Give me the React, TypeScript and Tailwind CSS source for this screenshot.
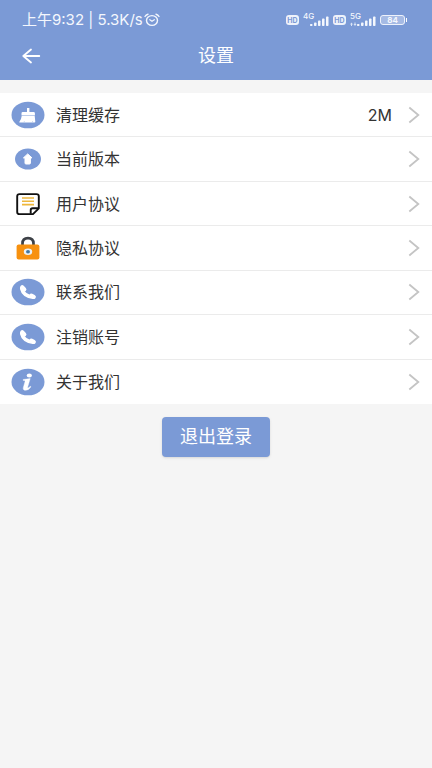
import type { ReactNode } from "react";

type SettingItem = {
  label: string;
  icon: ReactNode;
  value?: string;
};

function BroomIcon() {
  return (
    <svg width="34" height="28" viewBox="0 0 34 28" aria-hidden>
      <ellipse cx="17" cy="14" rx="16.5" ry="13.3" fill="#7b9ad6" />
      <path
        d="M16 7h2.400v4h4.200q1.300 0 1.300 1.200v2.300H10.500v-2.300q0-1.200 1.300-1.200H16zM10.700 14.900h13l.6 5.700q.1 1-.9 1H8.900q-1 0-.5-.9 1.900-2.300 2.300-5.800z"
        fill="#fff"
      />
      <path d="M12.800 21.800l.6-1.600M21.500 21.800v-1.600" stroke="#b9c9ea" strokeWidth="0.800" />
    </svg>
  );
}

function UpdateIcon() {
  return (
    <svg width="34" height="28" viewBox="0 0 34 28" aria-hidden>
      <ellipse cx="17" cy="14" rx="13" ry="10.600" fill="#7b9ad6" />
      <path
        d="M16.700 8.900l4.300 4h-1.600v5.200q0 .9-.9.900h-3.600q-.9 0-.9-.9v-5.200h-1.600z"
        fill="#fff"
        stroke="#fff"
        strokeWidth="1"
        strokeLinejoin="round"
      />
    </svg>
  );
}

function NoteIcon() {
  return (
    <svg width="34" height="28" viewBox="0 0 34 28" fill="none" aria-hidden>
      <path
        d="M8.500 4.100h17q2.300 0 2.300 2.200v12.100l-5.800 5.700H8.500q-2.300 0-2.300-2.200V6.300q0-2.200 2.300-2.200z"
        stroke="#111"
        strokeWidth="1.900"
        strokeLinejoin="round"
      />
      <path d="M19.700 23.800v-3.600q0-1.900 2-1.900h5.800" stroke="#111" strokeWidth="1.900" />
      <path d="M11 8h12M11 11.300h12M11 14.600h12" stroke="#eeb73c" strokeWidth="1.600" />
    </svg>
  );
}

function LockIcon() {
  return (
    <svg width="34" height="28" viewBox="0 0 34 28" fill="none" aria-hidden>
      <path d="M11.500 11V9.600q0-5.400 5.500-5.400t5.500 5.400V11" stroke="#3d4147" strokeWidth="2.700" />
      <rect x="5.600" y="10.500" width="22.800" height="15" rx="2" fill="#f7910f" />
      <ellipse cx="17" cy="17.700" rx="4.200" ry="3.300" fill="#e9f0f4" />
      <ellipse cx="17" cy="17.700" rx="2" ry="1.700" fill="#44779f" />
    </svg>
  );
}

function PhoneIcon() {
  return (
    <svg width="34" height="28" viewBox="0 0 34 28" fill="none" aria-hidden>
      <ellipse cx="17" cy="14" rx="16.5" ry="13.3" fill="#7b9ad6" />
      <g stroke="#fff" strokeLinecap="round">
        <path d="M10.600 10.500q1.700 7.300 11.500 8.900" strokeWidth="3.400" />
        <path d="M11.200 9.200l2.100 2.200M20.400 17.700l2.400 1.100" strokeWidth="4.200" />
      </g>
    </svg>
  );
}

function InfoIcon() {
  return (
    <svg width="34" height="28" viewBox="0 0 34 28" aria-hidden>
      <ellipse cx="17" cy="14" rx="16.5" ry="13.3" fill="#7b9ad6" />
      <ellipse cx="18.300" cy="7.400" rx="2.600" ry="2" fill="#fff" />
      <path
        d="M12.200 11.500l7-.9-2.500 8.300q-.3 1.200.5 1 .9-.3 2.100-1.700l.7.600q-2.300 3.500-5.300 3.500-3.200 0-2.300-3.100l1.600-5.500q.3-1.300-.7-1.300h-1.100z"
        fill="#fff"
        stroke="#fff"
        strokeWidth="0.400"
      />
    </svg>
  );
}

function AlarmIcon() {
  return (
    <svg width="16" height="14" viewBox="0 0 16 14" fill="none" stroke="currentColor" strokeLinecap="round" aria-hidden>
      <ellipse cx="8" cy="7.500" rx="5.500" ry="4.900" strokeWidth="1.400" />
      <path d="M1 3.500Q2 1.600 4 1.200M15 3.500Q14 1.600 12 1.200" strokeWidth="1.400" />
      <path d="M5.800 6.700L8 8.300l2.300-1.600" strokeWidth="1.200" />
    </svg>
  );
}

function HdBadge() {
  return (
    <span className="flex h-[10px] w-[13px] items-center justify-center rounded-[3px] bg-[#eef2fb] text-[7px] leading-none font-bold text-[#7b9ad6]">
      HD
    </span>
  );
}

function Signal({ label, data = false }: { label: string; data?: boolean }) {
  return (
    <span className="relative flex h-[14px] w-[26px] items-end justify-end">
      <span className="absolute -top-px left-0 text-[8px] leading-none font-medium">{label}</span>
      <svg width="26" height="12" viewBox="0 0 26 12" fill="currentColor" aria-hidden>
        {data && <path d="M0 9.500l1.500-2 1.500 2H2V11H1V9.500zM3.500 9h1V7.500h1V9h1L5 11z" opacity="0.800" />}
        <rect x="7" y="9" width="2.500" height="2" rx="0.800" />
        <rect x="11" y="7.500" width="2.500" height="3.500" rx="0.800" />
        <rect x="15" y="5.500" width="2.500" height="5.500" rx="0.800" />
        <rect x="19" y="3.500" width="2.500" height="7.500" rx="0.800" />
        <rect x="23" y="1.500" width="2.500" height="9.500" rx="0.800" />
      </svg>
    </span>
  );
}

function Battery({ level }: { level: number }) {
  return (
    <span className="flex items-center gap-px">
      <span className="flex h-[10px] w-[25px] items-center justify-center rounded-[3px] border border-[#eef2fb] bg-[#a5bae4] text-[8px] leading-none font-bold">
        {level}
      </span>
      <span className="h-1 w-px bg-white" />
    </span>
  );
}

function StatusBar() {
  return (
    <div className="flex h-10 items-center justify-between pr-[25px] pl-[22px] text-[#f4f7fd]">
      <div className="flex items-center gap-px text-[15px] leading-5 whitespace-nowrap">
        <span>上午9:32 | 5.3K/s</span>
        <AlarmIcon />
      </div>
      <div className="flex items-center gap-1">
        <HdBadge />
        <Signal label="4G" />
        <HdBadge />
        <Signal label="5G" data />
        <Battery level={84} />
      </div>
    </div>
  );
}

function ChevronIcon() {
  return (
    <svg width="12" height="18" viewBox="0 0 12 18" fill="none" stroke="#c4c4c4" strokeWidth="1.800" aria-hidden>
      <path d="M1.300 1.500L10.300 9l-9 7.500" />
    </svg>
  );
}

const items: SettingItem[] = [
  { label: "清理缓存", icon: <BroomIcon />, value: "2M" },
  { label: "当前版本", icon: <UpdateIcon /> },
  { label: "用户协议", icon: <NoteIcon /> },
  { label: "隐私协议", icon: <LockIcon /> },
  { label: "联系我们", icon: <PhoneIcon /> },
  { label: "注销账号", icon: <PhoneIcon /> },
  { label: "关于我们", icon: <InfoIcon /> },
];

export default function App() {
  return (
    <div className="min-h-screen bg-[#f5f5f5] font-['Inter','Noto_Sans_CJK_SC',sans-serif] text-[#333]">
      <header className="bg-[#7b9ad6] pb-2 text-white">
        <StatusBar />
        <div className="grid h-8 grid-cols-[1fr_auto_1fr] items-center px-[22px]">
          <button type="button" aria-label="返回" className="justify-self-start">
            <svg width="19" height="16" viewBox="0 0 19 16" fill="none" stroke="currentColor" strokeWidth="1.800" strokeLinecap="round" strokeLinejoin="round" aria-hidden>
              <path d="M9 1.500L1.300 8 9 14.500M1.300 8h16" />
            </svg>
          </button>
          <h1 className="text-lg leading-6">设置</h1>
        </div>
      </header>

      <main className="pt-[13px]">
        <ul className="grid min-h-[311px] auto-rows-fr divide-y divide-[#ebebeb] bg-white">
          {items.map((item) => (
            <li key={item.label}>
              <button type="button" className="flex h-full w-full items-center pr-3 pl-[11px] text-left text-base leading-6">
                {item.icon}
                <span className="ml-[11px] flex-1">{item.label}</span>
                {item.value && <span className="mr-4">{item.value}</span>}
                <ChevronIcon />
              </button>
            </li>
          ))}
        </ul>

        <div className="flex justify-center pt-[13px]">
          <button
            type="button"
            className="h-10 rounded bg-[#7b9ad6] px-[18px] text-lg leading-6 text-white shadow-sm"
          >
            退出登录
          </button>
        </div>
      </main>
    </div>
  );
}
